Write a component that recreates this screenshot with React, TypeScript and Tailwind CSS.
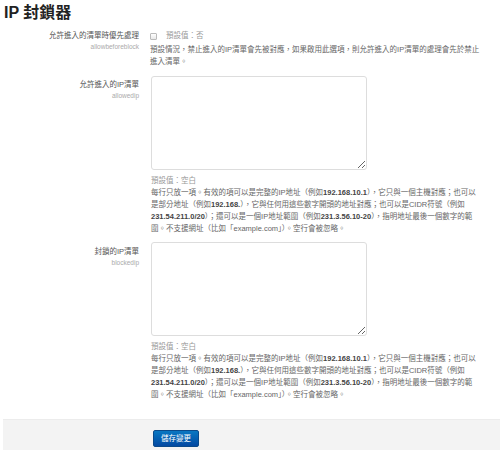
import React from "react";

const font = { fontFamily: '"Liberation Sans", "Noto Sans CJK TC", sans-serif' };

function IpDesc() {
  return (
    <div className="text-[7.5px] leading-[12px] text-[#666] whitespace-nowrap">
      <div className="text-[#999]">預設值：空白</div>
      <div>
        每行只放一項。有效的項可以是完整的IP地址（例如<b className="text-[#444]">192.168.10.1</b>），它只與一個主機對應；也可以
      </div>
      <div>
        是部分地址（例如<b className="text-[#444]">192.168.</b>），它與任何用這些數字開頭的地址對應；也可以是CIDR符號（例如
      </div>
      <div>
        <b className="text-[#444]">231.54.211.0/20</b>）；還可以是一個IP地址範圍（例如<b className="text-[#444]">231.3.56.10-20</b>），指明地址最後一個數字的範
      </div>
      <div>圍。不支援網址（比如「example.com」）。空行會被忽略。</div>
    </div>
  );
}

function Label({ title, name }: { title: string; name: string }) {
  return (
    <div className="w-[139px] shrink-0 text-right">
      <div className="text-[7.5px] leading-[11px] text-[#555]">{title}</div>
      <div className="text-[6.5px] leading-[11px] text-[#aaa]">{name}</div>
    </div>
  );
}

export default function App() {
  return (
    <div className="w-[500px] h-[450px] bg-white overflow-hidden relative" style={font}>
      <h2 className="pl-[4px] pt-[2px] text-[16px] leading-[22px] font-bold text-[#222]">IP 封鎖器</h2>

      <div className="mt-[6px] flex gap-[11px]">
        <Label title="允許進入的清單時優先處理" name="allowbeforeblock" />
        <div className="flex flex-col">
          <div className="flex items-center gap-[9px] h-[12px]">
            <div className="w-[7px] h-[7px] border border-[#bbb] rounded-[1px] bg-gradient-to-b from-white to-[#e8e8e8]" />
            <span className="text-[7.5px] text-[#999]">預設值：否</span>
          </div>
          <div className="mt-[2px] text-[7.5px] leading-[12px] text-[#666] whitespace-nowrap">
            <div>預設情況，禁止進入的IP清單會先被對應，如果啟用此選項，則允許進入的IP清單的處理會先於禁止</div>
            <div>進入清單。</div>
          </div>
        </div>
      </div>

      <div className="mt-[8px] flex gap-[12px]">
        <div className="pt-[3px]">
          <Label title="允許進入的IP清單" name="allowedip" />
        </div>
        <div className="flex flex-col">
          <textarea className="w-[216px] h-[94px] border border-[#ddd] rounded-[3px] bg-white outline-none" />
          <div className="mt-[5px]">
            <IpDesc />
          </div>
        </div>
      </div>

      <div className="mt-[7px] flex gap-[12px]">
        <div className="pt-[4px]">
          <Label title="封鎖的IP清單" name="blockedip" />
        </div>
        <div className="flex flex-col">
          <textarea className="w-[216px] h-[94px] border border-[#ddd] rounded-[3px] bg-white outline-none" />
          <div className="mt-[5px]">
            <IpDesc />
          </div>
        </div>
      </div>

      <div className="mt-[18px] ml-[3px] h-[40px] bg-[#f3f3f3] border-t border-[#ececec] pl-[150px] pt-[10px] flex items-start">
        <button className="w-[46px] h-[17px] rounded-[2px] border border-[#0a4a8a] bg-gradient-to-b from-[#0a77c2] to-[#0449a2] text-white text-[7.5px] leading-[15px]">
          儲存變更
        </button>
      </div>
    </div>
  );
}
